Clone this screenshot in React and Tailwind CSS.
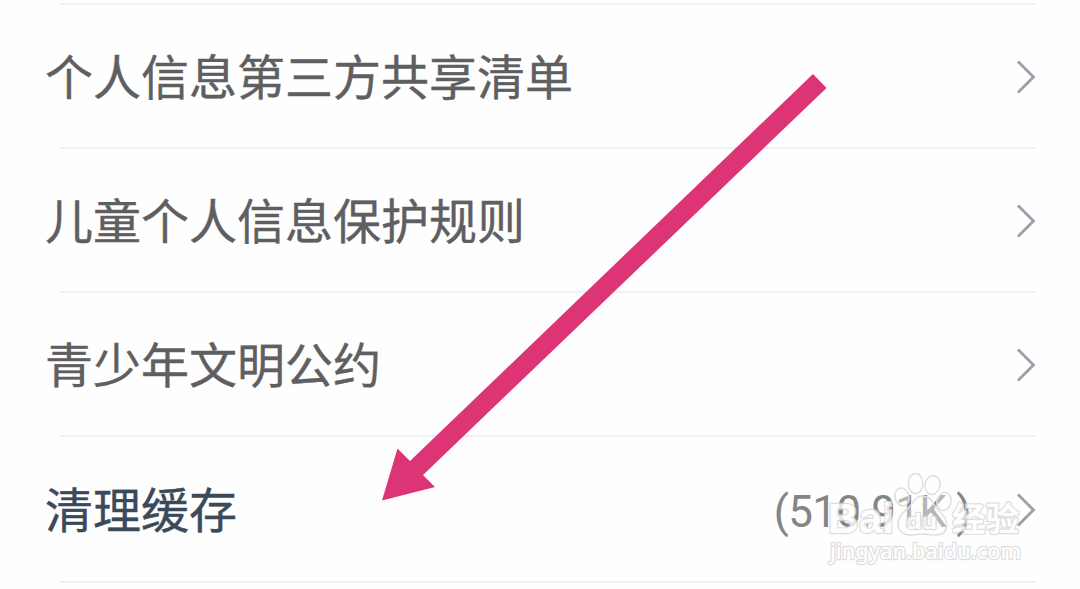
const items = [
  { id: 1, label: "个人信息第三方共享清单" },
  { id: 2, label: "儿童个人信息保护规则" },
  { id: 3, label: "青少年文明公约" },
  { id: 4, label: "清理缓存", value: "(510.91K )", active: true },
];

function Chevron() {
  return (
    <svg className="mt-0.5 h-9 w-5 shrink-0" viewBox="0 0 20 36" fill="none">
      <path d="M2 2.5L17.5 18L2 33.5" stroke="#98a0a9" strokeWidth="2.8" />
    </svg>
  );
}

function Row({ item }) {
  return (
    <li>
      <button
        className={`${
          item.active ? "h-36 text-[#3b4959]" : "h-[142px] text-[#5f5f62]"
        } w-full flex items-center justify-between pl-[45px] pr-11 text-left`}
      >
        <span className="mb-1 text-[48px] leading-none whitespace-nowrap [-webkit-text-stroke:0.4px_currentColor]">
          {item.label}
        </span>
        <span className="flex items-center">
          {item.value && (
            <span className="mt-1.5 mr-[45px] font-[Roboto,'Noto_Sans_CJK_SC',sans-serif] text-[44px] leading-none tracking-[-0.7px] whitespace-pre text-[#858585]">
              {item.value}
            </span>
          )}
          <Chevron />
        </span>
      </button>
      <div className="ml-[60px] mr-[45px] h-0.5 bg-[#f0f0f1]" />
    </li>
  );
}

function Arrow() {
  return (
    <svg
      className="pointer-events-none absolute inset-0 h-full w-full"
      viewBox="0 0 1080 589"
    >
      <path
        d="M813 74L826.5 88L423 475L435 487L382 500.5L397.5 448.5L410 461Z"
        fill="#dc3474"
      />
    </svg>
  );
}

function Watermark() {
  return (
    <svg
      className="pointer-events-none absolute left-[820px] top-[465px] h-[110px] w-[215px]"
      viewBox="0 0 215 110"
      fill="#ffffff"
      stroke="#d6d6d6"
      strokeWidth="2.4"
      strokeLinejoin="round"
    >
      <g fillOpacity="0.4" stroke="#dedede" strokeWidth="1.5">
        <ellipse cx="82" cy="32" rx="7" ry="9" transform="rotate(-15 82 32)" />
        <ellipse cx="95.5" cy="18.5" rx="7.3" ry="10" />
        <ellipse cx="112.5" cy="20" rx="7.5" ry="9.5" transform="rotate(12 112.5 20)" />
        <ellipse cx="124" cy="36.5" rx="7" ry="9" transform="rotate(15 124 36.5)" />
        <path d="M103 31C112 31 114 42 120 47C130 56 129 70 116 70C108 70 104 68 97 69.5C84 72 75 66 79 54C82 46 89 44 93 37C96 33 98 31 103 31Z" />
      </g>
      <g className="opacity-80 [paint-order:stroke]">
        <g className="font-['Liberation_Sans',sans-serif] font-bold">
          <text x="8" y="68" fontSize="43" textLength="66" lengthAdjust="spacingAndGlyphs">
            Bai
          </text>
          <text x="86" y="64" fontSize="22" textLength="31" lengthAdjust="spacingAndGlyphs">
            du
          </text>
        </g>
        <text
          className="font-['Noto_Sans_CJK_SC',sans-serif] font-bold"
          x="132"
          y="65.5"
          fontSize="33"
          textLength="67"
          lengthAdjust="spacingAndGlyphs"
        >
          经验
        </text>
        <text
          className="font-['Noto_Sans',sans-serif] font-medium"
          x="10"
          y="94"
          fontSize="22"
          textLength="191"
          lengthAdjust="spacingAndGlyphs"
        >
          jingyan.baidu.com
        </text>
      </g>
    </svg>
  );
}

export default function App() {
  return (
    <main className="relative h-[589px] w-[1080px] overflow-hidden bg-[#fefefe] pt-[3px] font-['Noto_Sans_CJK_SC',sans-serif] antialiased">
      <div className="ml-[60px] mr-[45px] h-0.5 bg-[#f0f0f1]" />
      <ul>
        {items.map((item) => (
          <Row key={item.id} item={item} />
        ))}
      </ul>
      <Arrow />
      <Watermark />
    </main>
  );
}
